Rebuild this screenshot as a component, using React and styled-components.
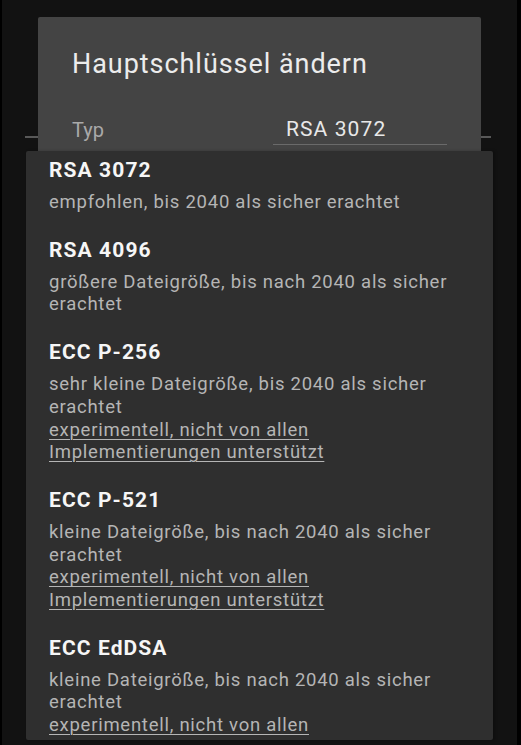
import React from "react";
import styled, { createGlobalStyle } from "styled-components";

const Global = createGlobalStyle`
  html, body { margin: 0; padding: 0; background: #000; }
  body { font-family: Roboto, "Noto Sans", "Liberation Sans", sans-serif; }
`;

const Screen = styled.div`
  position: relative;
  height: 745px;
  margin: 0 4px 0 2px;
  background: #121212;
  overflow: hidden;
`;

const UnderPage = styled.div`
  padding: 136px 26px 0 23px;
`;

const UnderDivider = styled.div`
  height: 2px;
  background: #585858;
`;

const Dialog = styled.section`
  position: absolute;
  left: 36px;
  top: 17px;
  width: 443px;
  height: 360px;
  background: #444444;
  border-radius: 2px;
  box-sizing: border-box;
  padding: 30px 34px 0 34px;
`;

const DialogTitle = styled.h1`
  margin: 0;
  font-size: 27px;
  letter-spacing: 0.95px;
  font-weight: 400;
  line-height: 34px;
  color: #ececec;
`;

const FieldRow = styled.div`
  display: flex;
  align-items: flex-end;
  margin-top: 34px;
`;

const FieldLabel = styled.span`
  flex: 1;
  font-size: 20px;
  line-height: 28px;
  color: #a9a9a9;
  padding-bottom: 1px;
`;

const FieldValue = styled.div`
  width: 174px;
  box-sizing: border-box;
  padding: 0 0 1px 13px;
  border-bottom: 1px solid #6a6a6a;
  font-size: 21px;
  letter-spacing: 1.1px;
  line-height: 28px;
  color: #e8e8e8;
`;

const Popup = styled.div`
  position: absolute;
  left: 24px;
  top: 151px;
  width: 467px;
  height: 589px;
  background: #2f2f2f;
  border-radius: 2px;
  overflow: hidden;
  box-shadow: 2px 0 3px rgba(0, 0, 0, 0.25);
`;

const OptionList = styled.ul`
  list-style: none;
  margin: -6px 0 0 0;
  padding: 0;
`;

const Option = styled.li`
  padding: 12px 28px 11px 23px;
`;

const OptionTitle = styled.div`
  font-size: 21px;
  letter-spacing: 1.1px;
  font-weight: 700;
  line-height: 26px;
  color: #f6f6f6;
`;

const OptionDesc = styled.div`
  margin-top: 8px;
  font-size: 18.5px;
  letter-spacing: 0.74px;
  line-height: 22.7px;
  color: #b5b5b5;
`;

const Warning = styled.span`
  display: block;
  text-decoration: underline;
  text-underline-offset: 3px;
  text-decoration-thickness: 1px;
`;

const options = [
  { title: "RSA 3072", desc: "empfohlen, bis 2040 als sicher erachtet" },
  { title: "RSA 4096", desc: "größere Dateigröße, bis nach 2040 als sicher erachtet" },
  { title: "ECC P-256", desc: "sehr kleine Dateigröße, bis 2040 als sicher erachtet", warn: true },
  { title: "ECC P-521", desc: "kleine Dateigröße, bis nach 2040 als sicher erachtet", warn: true },
  { title: "ECC EdDSA", desc: "kleine Dateigröße, bis nach 2040 als sicher erachtet", warn: true },
];

export default function App() {
  return (
    <>
      <Global />
      <Screen>
        <UnderPage>
          <UnderDivider />
        </UnderPage>
        <Dialog>
          <DialogTitle>Hauptschlüssel ändern</DialogTitle>
          <FieldRow>
            <FieldLabel>Typ</FieldLabel>
            <FieldValue>RSA 3072</FieldValue>
          </FieldRow>
        </Dialog>
        <Popup>
          <OptionList>
            {options.map((o) => (
              <Option key={o.title}>
                <OptionTitle>{o.title}</OptionTitle>
                <OptionDesc>
                  {o.desc}
                  {o.warn && (
                    <Warning>experimentell, nicht von allen Implementierungen unterstützt</Warning>
                  )}
                </OptionDesc>
              </Option>
            ))}
          </OptionList>
        </Popup>
      </Screen>
    </>
  );
}
